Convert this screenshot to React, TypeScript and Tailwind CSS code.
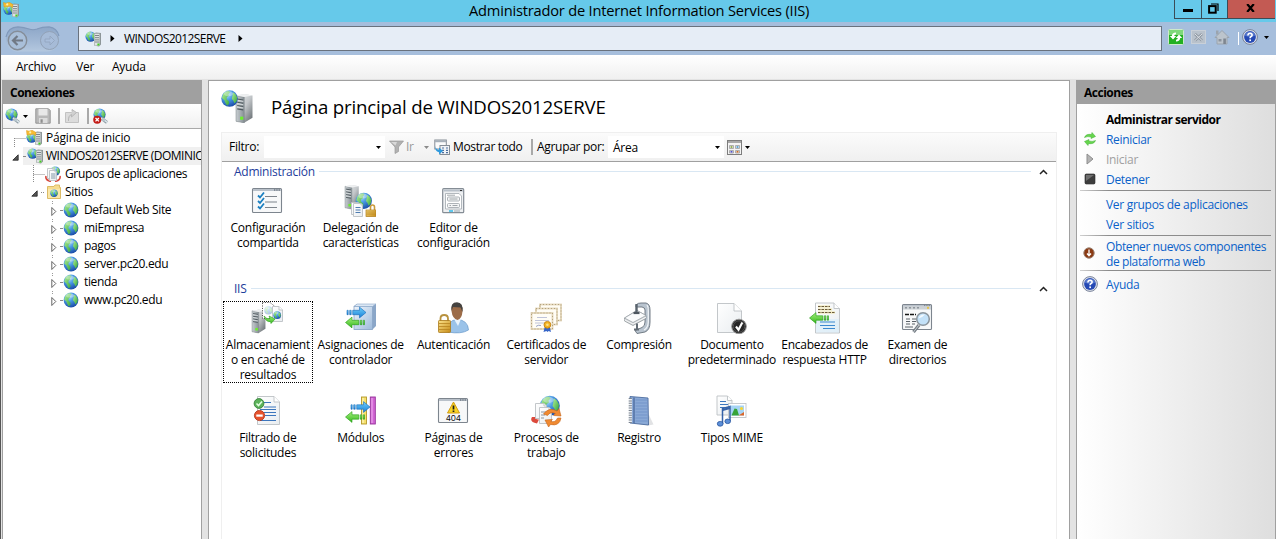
import type { ReactNode } from "react";

const Defs = () => (
  <svg width="0" height="0" className="absolute">
    <defs>
      <radialGradient id="sea" cx="0.35" cy="0.25" r="0.85">
        <stop offset="0" stopColor="#b5e2fa" />
        <stop offset="0.4" stopColor="#4a9ae4" />
        <stop offset="1" stopColor="#123f9e" />
      </radialGradient>
      <linearGradient id="land" x1="0" y1="0" x2="1" y2="1">
        <stop offset="0" stopColor="#b4f09a" />
        <stop offset="1" stopColor="#2fa438" />
      </linearGradient>
      <linearGradient id="metal" x1="0" y1="0" x2="1" y2="0">
        <stop offset="0" stopColor="#c9cfd2" />
        <stop offset="1" stopColor="#868f94" />
      </linearGradient>
      <linearGradient id="metalDark" x1="0" y1="0" x2="1" y2="1">
        <stop offset="0" stopColor="#eceeef" />
        <stop offset="0.5" stopColor="#c3c7ca" />
        <stop offset="1" stopColor="#5d6468" />
      </linearGradient>
      <linearGradient id="gold" x1="0" y1="0" x2="1" y2="1">
        <stop offset="0" stopColor="#fbe28a" />
        <stop offset="1" stopColor="#c58a16" />
      </linearGradient>
      <linearGradient id="greenArrow" x1="0" y1="0" x2="0" y2="1">
        <stop offset="0" stopColor="#a4f07c" />
        <stop offset="1" stopColor="#35b81c" />
      </linearGradient>
      <linearGradient id="blueArrow" x1="0" y1="0" x2="0" y2="1">
        <stop offset="0" stopColor="#6fd0fa" />
        <stop offset="1" stopColor="#1a80d8" />
      </linearGradient>
      <linearGradient id="cube" x1="0" y1="0" x2="1" y2="1">
        <stop offset="0" stopColor="#eef4fb" />
        <stop offset="1" stopColor="#9dbadb" />
      </linearGradient>
      <linearGradient id="page" x1="0" y1="0" x2="1" y2="1">
        <stop offset="0" stopColor="#ffffff" />
        <stop offset="1" stopColor="#e9edf0" />
      </linearGradient>
      <linearGradient id="pill" x1="0" y1="0" x2="0" y2="1">
        <stop offset="0" stopColor="#8ea7c8" />
        <stop offset="0.5" stopColor="#9fb6d3" />
        <stop offset="1" stopColor="#b4c8df" />
      </linearGradient>
    </defs>
  </svg>
);

type Pos = { x?: number; y?: number; s?: number };

const Globe = ({ x = 0, y = 0, s = 1 }: Pos) => (
  <g transform={`translate(${x} ${y}) scale(${s})`}>
    <circle cx="8" cy="8" r="7.4" fill="url(#sea)" />
    <path d="M2.4 3.8 L5 1.6 L7.4 1.2 L8.6 2.6 L7 4 L7.4 5.6 L5.6 6.6 L5.4 8.6 L7.4 10.4 L7.6 12.4 L5.8 14.4 L4.4 12 L3.4 9.4 L1.2 7.6Z" fill="url(#land)" />
    <path d="M11 2.4 L13.2 4 L14.8 7 L14.4 10.2 L12.4 12.4 L11.4 10 L10 8.2 L10.6 5.6Z" fill="url(#land)" />
    <ellipse cx="7" cy="3.6" rx="4" ry="2.2" fill="#fff" opacity="0.35" />
  </g>
);

const Server = ({ x = 0, y = 0, s = 1 }: Pos) => (
  <g transform={`translate(${x} ${y}) scale(${s})`}>
    <path d="M0 1.5 L8 0 L16 1.5 L16 23 L8 28 L0 26.5Z" fill="url(#metalDark)" />
    <path d="M0 1.5 L8 3 L8 28 L0 26.5Z" fill="url(#metal)" stroke="#7a8287" strokeWidth="0.5" />
    <path d="M0 1.5 L8 0 L16 1.5 L8 3Z" fill="#eef0f1" />
    <path d="M1.2 4.8 L7 5.8 M1.2 8 L7 9 M1.2 11.2 L7 12.2 M1.2 14.4 L7 15.4" stroke="#4f595e" strokeWidth="1.1" />
    <path d="M1.2 6.2 L7 7.2 M1.2 9.4 L7 10.4 M1.2 12.6 L7 13.6" stroke="#e2e6e8" strokeWidth="0.8" />
    <rect x="4" y="22" width="3" height="3" fill="#6cf02c" />
  </g>
);

const MiniServer = ({ x = 0, y = 0 }: Pos) => (
  <g transform={`translate(${x} ${y})`}>
    <path d="M0 1 L2 0 L7 0.5 L7 12 L5 14 L0 13Z" fill="#8d9698" />
    <path d="M0.5 1.2 H5.5 V13 H0.5Z" fill="#dfe3e3" />
    <path d="M1 3 H5 M1 5.2 H5 M1 7.4 H5 M1 9.5 H5" stroke="#727b80" strokeWidth="0.9" />
    <rect x="3.4" y="11" width="2" height="2" fill="#43cf20" />
  </g>
);

const Page = ({ x = 0, y = 0, w = 24, h = 30, f = 6 }: { x?: number; y?: number; w?: number; h?: number; f?: number }) => (
  <g transform={`translate(${x} ${y})`}>
    <path d={`M0.5 0.5 H${w - f} L${w - 0.5} ${f} V${h - 0.5} H0.5Z`} fill="url(#page)" stroke="#bcc1c4" strokeWidth="0.9" />
    <path d={`M${w - f} 0.5 V${f} H${w - 0.5}`} fill="#fff" stroke="#bcc1c4" strokeWidth="0.9" />
  </g>
);

const Lock = ({ x = 0, y = 0, open = false }: Pos & { open?: boolean }) => (
  <g transform={`translate(${x} ${y})`}>
    <path d={open ? "M5 6 V3 Q5 1 7 1 Q9 1 9 3 V6" : "M3 7 V4 Q3 1 6 1 Q9 1 9 4 V7"} fill="none" stroke="#c89a3c" strokeWidth="1.6" />
    <rect x="0.5" y="6" width="10" height="6.5" fill="url(#gold)" stroke="#b07c18" strokeWidth="0.7" />
    <path d="M1 8 H10.5 M1 10 H10.5" stroke="#b47f18" strokeWidth="0.7" />
  </g>
);

const ArrowR = ({ x = 0, y = 0 }: Pos) => (
  <g transform={`translate(${x} ${y})`} fill="url(#blueArrow)" stroke="#1769b8" strokeWidth="0.6">
    <path d="M0.5 3.8 h1.2 v4.4 h-1.2Z M3.2 3.8 h1.5 v4.4 h-1.5Z" />
    <path d="M6.2 3.8 H13 V0.6 L19.5 6 L13 11.4 V8.2 H6.2Z" />
  </g>
);

const ArrowL = ({ x = 0, y = 0 }: Pos) => (
  <g transform={`translate(${x} ${y})`} fill="url(#greenArrow)" stroke="#249a16" strokeWidth="0.6">
    <path d="M19.5 3.8 h-1.2 v4.4 h1.2Z M16.8 3.8 h-1.5 v4.4 h1.5Z" />
    <path d="M13.8 3.8 H7 V0.6 L0.5 6 L7 11.4 V8.2 H13.8Z" />
  </g>
);

const Window = ({ x, y, w, h }: { x: number; y: number; w: number; h: number }) => (
  <g>
    <rect x={x + 0.5} y={y + 0.5} width={w - 1} height={h - 1} rx="1" fill="#f7f8f9" stroke="#7d858e" strokeWidth="1.1" />
    <rect x={x + 1} y={y + 1} width={w - 2} height="2" fill="#b9c1ca" />
    <path d={`M${x + w - 8} ${y + 2} h1.3 m1 0 h1.3 m1 0 h1.3`} stroke="#4c5560" strokeWidth="1.2" />
  </g>
);

const Icon = ({ size = 32, vb, children }: { size?: number; vb?: number; children: ReactNode }) => (
  <svg width={size} height={size} viewBox={`0 0 ${vb ?? size} ${vb ?? size}`} className="block shrink-0">
    {children}
  </svg>
);

const GlobeServer = ({ star = false }: { star?: boolean }) => (
  <Icon size={16}>
    <Globe x={0} y={star ? 2 : 0} s={0.7} />
    <MiniServer x={9} y={1.5} />
    {star && (
      <>
        <path d="M0.5 0.5 L3 1.2 L6 0.2 L10 2.5 L9.5 5.5 L7.5 4.2 L3.8 4.6 L1 5 Z" fill="#f7bd33" stroke="#dd9512" strokeWidth="0.5" />
        <circle cx="4.2" cy="2.4" r="1.1" fill="#fff1b0" />
      </>
    )}
  </Icon>
);

const HelpIcon = () => (
  <Icon size={16}>
    <circle cx="8" cy="8" r="7.4" fill="#dfe3ec" stroke="#6d7891" strokeWidth="0.9" />
    <circle cx="8" cy="8" r="5.9" fill="#2549b4" />
    <path d="M2.8 6.5 A5.5 5.5 0 0 1 13.2 6.5 Q8 9 2.8 6.5Z" fill="#7d9be0" opacity="0.6" />
    <path d="M5.9 6.5 Q6 4.3 8.1 4.3 Q10.2 4.4 10.1 6.2 Q10 7.2 8.8 7.8 Q8.1 8.2 8.1 9.3" fill="none" stroke="#fff" strokeWidth="1.6" />
    <rect x="7.3" y="10.4" width="1.7" height="1.7" fill="#fff" />
  </Icon>
);

const Caret = ({ color = "#000" }: { color?: string }) => (
  <svg width="5" height="3" viewBox="0 0 5 3" className="block shrink-0">
    <path d="M0 0 H5 L2.5 3Z" fill={color} />
  </svg>
);

const Sep = () => <span className="block h-4 w-[2px] shrink-0 bg-[#a9a9a9]" />;

const icons: Record<string, ReactNode> = {
  shared: (
    <>
      <Window x={1} y={3} w={30} h={25} />
      <path d="M14 11.5 H26 M14 17 H26 M14 22.5 H26" stroke="#7d848c" strokeWidth="1" />
      <path d="M7 10.5 L9 12.5 L13 7.5 M7 16 L9 18 L13 13 M7 21.5 L9 23.5 L13 18.5" stroke="#1a7fc0" strokeWidth="1.8" fill="none" />
    </>
  ),
  delegation: (
    <>
      <Server x={1} y={0} s={0.86} />
      <Globe x={11} y={7} s={1.1} />
      <Page x={7} y={17} w={9} h={13} f={2} />
      <Page x={9} y={18} w={10} h={14} f={2} />
      <path d="M11.5 22.5 H16.5 M11.5 25 H16.5 M11.5 27.5 H16.5" stroke="#4e7cb0" />
      <Lock x={21.5} y={19} open />
    </>
  ),
  editor: (
    <>
      <rect x="5.7" y="3.7" width="21" height="24" rx="1" fill="#eef0f2" stroke="#858d95" strokeWidth="1.2" />
      <rect x="6.5" y="4.5" width="19.5" height="2" fill="#b9c1ca" />
      <path d="M23 5.5 h2" stroke="#333" />
      <path d="M8.5 8.5 H22 L24.5 11 V24 H8.5Z" fill="#fff" stroke="#aab1b7" strokeWidth="0.9" />
      <rect x="10.5" y="12" width="12" height="4" rx="1" fill="#f4f5f6" stroke="#9aa1a7" strokeWidth="0.8" />
      <rect x="10.5" y="18.5" width="12" height="4" rx="1" fill="#f4f5f6" stroke="#9aa1a7" strokeWidth="0.8" />
      <path d="M12.5 14 h8 M12.5 20.5 h1.5 M15.5 20.5 h5 M10 10.2 h8" stroke="#8b9298" strokeWidth="0.8" />
      <path d="M12 26 h4" stroke="#22b5e8" strokeWidth="1.4" />
      <path d="M17 26 h6" stroke="#b4bbc1" strokeWidth="1.4" />
    </>
  ),
  cache: (
    <>
      <Server x={1} y={7.5} s={0.84} />
      <path d="M11.5 0.5 H19 L24 4.5 V16.5 H11.5Z" fill="#fff" stroke="#333" strokeWidth="0.9" strokeDasharray="1 1.4" />
      <g opacity="0.35"><Globe x={13} y={4} s={0.55} /></g>
      <Page x={21} y={4} w={11} h={16} f={4} />
      <Globe x={22} y={9} s={0.52} />
      <path d="M13 14 Q16 18 19 16.5 L18 14 L24 17 L20 21.5 L19.6 19.5 Q15 20.5 13 14Z" fill="url(#greenArrow)" stroke="#249a16" strokeWidth="0.6" />
    </>
  ),
  handlers: (
    <>
      <path d="M10 4 L13 2 H32 V24 L28.5 27.5 H10Z" fill="#8aa6c8" />
      <rect x="10" y="4.5" width="18.5" height="23" fill="url(#cube)" stroke="#8aa6c8" strokeWidth="0.8" />
      <path d="M10 4.5 L13 2 H32 L28.5 4.5Z" fill="#dbe7f4" stroke="#8aa6c8" strokeWidth="0.6" />
      <ArrowR x={2.5} y={4.5} />
      <ArrowL x={1} y={14.5} />
    </>
  ),
  auth: (
    <>
      <path d="M11 30 Q10 18 20 17.5 Q31 18 31.5 28 Q24 32.5 11 30Z" fill="#9bc3e9" stroke="#6c9bca" strokeWidth="0.7" />
      <path d="M17 17 L21 24 L24 17Z" fill="#e9f3fc" />
      <path d="M14.5 9 Q14 1 20 1 Q26 1 25.5 9 Q25 17 20.5 18 Q15.5 17 14.5 9Z" fill="#9c6c48" />
      <path d="M14.5 9 Q13 0.5 20 0.3 Q26.5 0.5 25.5 10 L23.5 5.5 L16 5Z" fill="#454340" />
      <path d="M3.5 19 V16.5 Q3.5 13 7.2 13 Q11 13 11 16.5 V19" fill="none" stroke="#b8923f" strokeWidth="1.8" />
      <rect x="1.5" y="18.5" width="12" height="12" rx="0.8" fill="url(#gold)" stroke="#a97818" strokeWidth="0.8" />
      <path d="M2 21.5 H13 M2 24.5 H13 M2 27.5 H13" stroke="#b88420" strokeWidth="0.8" />
    </>
  ),
  certs: (
    <>
      {[[10, 2.5], [6, 6.5], [1.5, 11]].map(([x, y]) => (
        <g key={x}>
          <rect x={x} y={y} width="21" height="16" fill="#fffdf6" stroke="#e3d5b8" strokeWidth="1.8" />
          <rect x={x} y={y} width="21" height="16" fill="none" stroke="#b3a37f" strokeWidth="1" strokeDasharray="1 2" />
        </g>
      ))}
      <path d="M7 15.5 H17 M5 18.5 H19 M5 21 H14" stroke="#b9bdd6" strokeWidth="0.9" />
      <path d="M6 24.5 q2 -2 5 -1" stroke="#98a2c8" fill="none" />
      <path d="M15 24 L13.5 30 L16.5 29 L17.5 30 L18.5 29 L21 30 L19.5 24Z" fill="#3565c8" />
      <circle cx="17.4" cy="22.8" r="3.4" fill="#f3b323" stroke="#c4810f" strokeWidth="0.9" />
      <circle cx="17.4" cy="22.8" r="1.3" fill="#fbe28a" />
    </>
  ),
  compress: (
    <>
      <path d="M13 3 Q15 0.8 18 1 H23 Q27 2 27 8 V20 Q27 28 22 30 L14 31.5 L12 28.5 L19 25.5 Q22 24 22 20 V8 Q22 5.5 19 5 H13Z" fill="#b9c4cf" stroke="#66717b" strokeWidth="0.9" />
      <path d="M24 3 Q25.5 5 25.3 9 V20 Q25 26 21 28" fill="none" stroke="#f2f6f9" strokeWidth="1.2" />
      <path d="M1.5 16 L14 8.5 L23 13.5 L23 16.5 L10 23.5 L1.5 19Z" fill="#cfd3d6" stroke="#858c91" strokeWidth="0.7" />
      <path d="M1.5 16 L14 8.5 L23 13.5 L10 20.5Z" fill="#fafbfc" stroke="#979ea3" strokeWidth="0.7" />
      <path d="M1.5 17.8 L10 22 L23 15.2" fill="none" stroke="#fff" strokeWidth="0.8" />
      <path d="M13.5 2 V10" stroke="#5a646d" strokeWidth="2.4" />
      <path d="M10.5 11 H16.5" stroke="#4c555e" strokeWidth="2.2" />
      <path d="M14 21.5 V28 M11 27.5 H16" stroke="#626b74" strokeWidth="2" fill="none" />
    </>
  ),
  defdoc: (
    <>
      <Page x={2} y={1} w={25} h={30} f={8} />
      <circle cx="24" cy="24.5" r="7.3" fill="#262626" stroke="#9a9a9a" />
      <circle cx="24" cy="24.5" r="5.7" fill="none" stroke="#616161" strokeWidth="0.7" />
      <path d="M21 24.5 L23.5 27.8 L27.3 20.5" fill="none" stroke="#fff" strokeWidth="2.1" />
    </>
  ),
  headers: (
    <>
      <Page x={7} y={0.5} w={25} h={31} f={6} />
      <path d="M8 17 H31 V30.5 H8Z" fill="#dbeefa" opacity="0.7" />
      <path d="M10 4.5 H22 M10 7.5 H24 M10 10.5 H27" stroke="#f0e6ac" strokeWidth="2" />
      <path d="M10 4.5 H22 M10 7.5 H24 M10 10.5 H27" stroke="#6a5a3e" strokeWidth="1.1" strokeDasharray="2.5 1" />
      <path d="M12 20 H27 M12 23.5 H27 M15 26.5 H27" stroke="#3d8ad0" strokeWidth="1.1" />
      <ArrowL x={1} y={10} />
    </>
  ),
  browse: (
    <>
      <Window x={1} y={2} w={30} h={26} />
      <path d="M2 5.8 H30" stroke="#ccd1d5" strokeWidth="3.5" />
      <path d="M4 5.8 H20" stroke="#8e969d" strokeWidth="1.5" strokeDasharray="2 2" />
      <rect x="26" y="4.8" width="2" height="2" fill="#e4c34d" />
      <path d="M4 12.5 H15" stroke="#151515" strokeWidth="1.5" strokeDasharray="4 1" />
      <path d="M5 17 H9 M11 17 H15 M5 19.5 H9 M11 19.5 H15 M5 22 H9 M11 22 H14 M4 25 H12" stroke="#5b6268" />
      <path d="M18 23 L12.5 30" stroke="#757d84" strokeWidth="3.2" />
      <path d="M18 23 L12.5 30" stroke="#c6ccd1" strokeWidth="1" />
      <circle cx="22" cy="17" r="6.3" fill="#c3e1f8" stroke="#8a949c" strokeWidth="1.5" />
      <path d="M17.5 16.5 Q19 12 24 12.5 Q21 16 17.5 16.5Z" fill="#fff" opacity="0.8" />
    </>
  ),
  filtering: (
    <>
      <Page x={6} y={1} w={23} h={29} f={6} />
      <path d="M13 7.5 H20 M13 12 H25 M9 14.5 H25 M13 17.5 H25 M14 20.5 H25 M9 25.5 H25" stroke="#3c76bd" />
      <circle cx="8" cy="8.5" r="4.9" fill="#5cb25a" stroke="#2b7a30" strokeWidth="0.8" />
      <path d="M5.5 8.5 L7.5 10.5 L11 6.5" fill="none" stroke="#e3ffe0" strokeWidth="1.6" />
      <circle cx="8.5" cy="20.5" r="5.1" fill="#e6522c" stroke="#ad2c12" strokeWidth="0.8" />
      <rect x="5.3" y="19.5" width="6.4" height="2.2" fill="#fff" />
    </>
  ),
  modules: (
    <>
      <rect x="17.5" y="2" width="5" height="27" fill="#f5e06c" stroke="#b3982a" strokeWidth="0.9" />
      <path d="M19 3 V28" stroke="#fff9cc" />
      <rect x="26.3" y="2" width="5" height="27" fill="#d264d4" stroke="#943099" strokeWidth="0.9" />
      <path d="M28 3 V28" stroke="#f0b2f1" />
      <ArrowR x={6.5} y={6} />
      <ArrowL x={1} y={16} />
    </>
  ),
  errors: (
    <>
      <Window x={1} y={3} w={30} h={25} />
      <path d="M16.5 7 L22.5 18 H10.5Z" fill="#f9d423" stroke="#d39c12" strokeWidth="1" strokeLinejoin="round" />
      <path d="M16.5 10.5 V14.5 M16.5 15.6 V17" stroke="#1a1a1a" strokeWidth="1.7" />
      <text x="16.3" y="26" textAnchor="middle" fontSize="8" textLength="15" lengthAdjust="spacingAndGlyphs" fill="#111" fontFamily="Inter, sans-serif">404</text>
    </>
  ),
  workers: (
    <>
      <Globe x={9} y={0} s={1.35} />
      <path d="M2 22 Q-1 27 7 28.5 L9 24.5 Q5 25 5.5 22Z" fill="#dc4a3c" />
      <Page x={5} y={8} w={12} h={16} f={3} />
      <Page x={9} y={12} w={13} h={17} f={3} />
      <path d="M11 17 H16 M11 20 H15 M11 23 H14" stroke="#8a97a4" />
      <path d="M13.5 19 Q19 11.5 27 16 L29 13.5 L31 21 L23.5 20.5 L25.4 18.6 Q20.5 16 17.5 20.5Z" fill="#f08a31" stroke="#c4631a" strokeWidth="0.6" />
      <path d="M31 23 Q29.5 31.5 20.5 29.5 L18.6 32 L15 25 L22.4 24.4 L20.9 26.4 Q25.4 27.8 27.6 23Z" fill="#f08a31" stroke="#c4631a" strokeWidth="0.6" />
    </>
  ),
  logging: (
    <>
      <path d="M12 28.5 L25 30.5 L30.5 29.5 L26 20Z" fill="#9aa0a5" opacity="0.3" />
      <path d="M7 1.5 L25 3 L25.5 30 L7 28Z" fill="#8aa9d6" stroke="#4d6d9f" strokeWidth="0.9" />
      <path d="M11 2.4 V28" stroke="#436398" strokeWidth="1.2" />
      <path d="M12.5 5 H24.5 M12.5 8 H24.5 M12.5 11 H24.5 M12.5 14 H24.5 M12.5 17 H24.5 M12.5 20 H24.5 M12.5 23 H24.5 M12.5 26 H24.5" stroke="#6f92c8" strokeWidth="0.9" />
      <path d="M7.3 3 V28" stroke="#eef1f5" strokeWidth="3.2" />
      <path d="M7.3 3 V28" stroke="#7a838e" strokeWidth="3.2" strokeDasharray="1 1.4" />
    </>
  ),
  mime: (
    <>
      <Page x={1.5} y={0.5} w={16} h={20} f={5} />
      <path d="M5 6.5 H11 M5 9.5 H14 M5 12.5 H14" stroke="#3c76bd" />
      <rect x="13.5" y="8.5" width="17.5" height="14" fill="#fff" stroke="#c0c5c9" strokeWidth="0.9" />
      <rect x="15.5" y="10.5" width="13.5" height="10" fill="#a5d4f5" />
      <path d="M16.5 20.5 L19.5 13.5 L22 14 L24 20.5Z" fill="#37a338" />
      <path d="M23.5 20.5 L29 17 V20.5Z" fill="#d9662b" />
      <circle cx="26.5" cy="13.5" r="1.6" fill="#f5d536" />
      <path d="M7.5 29 V13.5 L15 11.5 V26" fill="none" stroke="#3562a8" strokeWidth="1.5" />
      <path d="M7.5 15 L15 13" stroke="#3562a8" strokeWidth="2.2" />
      <ellipse cx="5.2" cy="28.8" rx="2.9" ry="2.4" fill="#5c8fd8" stroke="#27549d" strokeWidth="0.8" />
      <ellipse cx="12.7" cy="26.3" rx="2.8" ry="2.3" fill="#5c8fd8" stroke="#27549d" strokeWidth="0.8" />
    </>
  ),
};

type ItemData = { icon: string; lines: string[]; focus?: boolean };

const Item = ({ icon, lines, focus }: ItemData) => (
  <div className="flex h-[93px] w-[92.8px] justify-center">
    <div
      className={
        focus
          ? "flex h-[82px] w-[90px] flex-col items-center border border-dotted border-black"
          : "flex h-[82px] w-[90px] flex-col items-center border border-transparent"
      }
    >
      <span className="-ml-px block"><Icon>{icons[icon]}</Icon></span>
      <div className="mt-[3px] text-center leading-[15px]">
        {lines.map((l) => (
          <div key={l} className="whitespace-nowrap">{l}</div>
        ))}
      </div>
    </div>
  </div>
);

const Group = ({ title, items, className }: { title: string; items: ItemData[]; className: string }) => (
  <section className={className}>
    <div className="flex h-4 items-center pr-[8px] pl-3">
      <span className="pt-[2px] text-[#1e3c9b]">{title}</span>
      <span className="ml-1 h-px flex-1 bg-[#d9e7f3]" />
      <svg width="9" height="6" viewBox="0 0 9 6" className="mt-px ml-2">
        <path d="M1 5 L4.5 1.5 L8 5" fill="none" stroke="#222" strokeWidth="1.5" />
      </svg>
    </div>
    <div className="mt-[5px] -ml-[0.5px] flex flex-wrap">
      {items.map((i) => (
        <Item key={i.icon} {...i} />
      ))}
    </div>
  </section>
);

const admin: ItemData[] = [
  { icon: "shared", lines: ["Configuración", "compartida"] },
  { icon: "delegation", lines: ["Delegación de", "características"] },
  { icon: "editor", lines: ["Editor de", "configuración"] },
];

const iis: ItemData[] = [
  { icon: "cache", lines: ["Almacenamient", "o en caché de", "resultados"], focus: true },
  { icon: "handlers", lines: ["Asignaciones de", "controlador"] },
  { icon: "auth", lines: ["Autenticación"] },
  { icon: "certs", lines: ["Certificados de", "servidor"] },
  { icon: "compress", lines: ["Compresión"] },
  { icon: "defdoc", lines: ["Documento", "predeterminado"] },
  { icon: "headers", lines: ["Encabezados de", "respuesta HTTP"] },
  { icon: "browse", lines: ["Examen de", "directorios"] },
  { icon: "filtering", lines: ["Filtrado de", "solicitudes"] },
  { icon: "modules", lines: ["Módulos"] },
  { icon: "errors", lines: ["Páginas de", "errores"] },
  { icon: "workers", lines: ["Procesos de", "trabajo"] },
  { icon: "logging", lines: ["Registro"] },
  { icon: "mime", lines: ["Tipos MIME"] },
];

const sites = ["Default Web Site", "miEmpresa", "pagos", "server.pc20.edu", "tienda", "www.pc20.edu"];

const OpenTri = () => (
  <svg width="7" height="7" viewBox="0 0 7 7" className="mt-[2px] block shrink-0">
    <path d="M6.2 0.8 V6.2 H0.8Z" fill="#555" stroke="#222" strokeWidth="0.8" />
  </svg>
);

const SiteTri = () => (
  <svg width="6" height="18" viewBox="0 0 6 18" className="block shrink-0">
    <path d="M1.5 0 V4" stroke="#999" strokeDasharray="1 1" />
    <path d="M0.8 6.5 L4.8 10.5 L0.8 14.5Z" fill="#fff" stroke="#555" strokeWidth="0.9" />
  </svg>
);

const Branch = ({ top }: { top: number }) => (
  <svg width="12" height="18" viewBox="0 0 12 18" className="block shrink-0">
    <path d={`M0.5 ${top} V18 M0.5 9.5 H12`} fill="none" stroke="#8a8a8a" strokeDasharray="1 1" />
  </svg>
);

const Dots = ({ className }: { className: string }) => (
  <span className={"block shrink-0 border-t border-dotted border-[#888] " + className} />
);

const Magnet = ({ stop = false }: { stop?: boolean }) => (
  <Icon size={16}>
    <Globe x={0} y={0} s={0.82} />
    <path d="M8 10 L14 14.5" stroke="#8b99a2" strokeWidth="3.4" />
    <path d="M8 10 L14.4 14.4" stroke="#dbe5ea" strokeWidth="1.6" />
    <circle cx="10.5" cy="11.6" r="1.8" fill="#b5c5cc" />
    {stop && (
      <>
        <circle cx="4.2" cy="11.7" r="4" fill="#c31b16" />
        <path d="M2.5 10 L5.9 13.4 M5.9 10 L2.5 13.4" stroke="#fff" strokeWidth="1.3" />
      </>
    )}
  </Icon>
);

const Tree = () => (
  <aside className="flex w-[200px] shrink-0 flex-col overflow-hidden border-r border-l border-[#a0a0a0] bg-white">
    <div className="flex h-6 shrink-0 items-center bg-[#a0a0a0] pt-[2px] pl-[7px] font-bold tracking-[-0.48px]">Conexiones</div>
    <div className="flex h-[25px] shrink-0 items-center border-b border-[#a9a9a9] bg-linear-to-b from-white to-[#f0f0f0] pl-[2px]">
      <Magnet />
      <span className="mr-[7px] ml-[2px]"><Caret /></span>
      <Icon size={16}>
        <path d="M0.8 0.8 H13.5 L15.2 2.5 V15.2 H0.8Z" fill="#b9b9b9" stroke="#969696" />
        <rect x="3.5" y="1" width="9" height="6.5" fill="#e8e8e8" />
        <rect x="4" y="10" width="8.5" height="5" fill="#dcdcdc" />
        <rect x="5.5" y="11.3" width="2.2" height="3.5" fill="#8f8f8f" />
      </Icon>
      <span className="mr-[4px] ml-[7px]"><Sep /></span>
      <Icon size={16}>
        <path d="M1.5 4.5 H14.5 V14.5 H1.5Z" fill="#dcdcdc" stroke="#c2c2c2" />
        <path d="M4.5 13 Q4 7.5 7.5 6.5 V9 L12.5 4.5 L8 1.5 V3.5" fill="#d0d0d0" stroke="#b0b0b0" strokeWidth="0.8" />
      </Icon>
      <span className="mr-[4px] ml-[7px]"><Sep /></span>
      <Magnet stop />
    </div>
    <div className="flex flex-col tracking-[-0.35px] whitespace-nowrap">
      <div className="flex h-[18px] items-center pl-[11px]">
        <Branch top={9} />
        <GlobeServer star />
        <span className="ml-[4px] tracking-[-0.18px]">Página de inicio</span>
      </div>
      <div className="flex h-[18px] items-center pl-[9px]">
        <OpenTri />
        <span className="ml-[4px] flex h-[18px] flex-1 items-center bg-[#f0f0f0]">
          <Dots className="mr-[2px] w-[2px]" />
          <GlobeServer />
          <span className="ml-[3px] tracking-[-0.52px]">WINDOS2012SERVE (DOMINIO</span>
        </span>
      </div>
      <div className="flex h-[18px] items-center pl-[30px]">
        <Branch top={0} />
        <Icon size={16}>
          <Globe x={5} y={0} s={0.65} />
          <path d="M1 10 Q0 14 6 15.5 M15 10 Q16 14 10 15.5" stroke="#d8493e" strokeWidth="1.6" fill="none" />
          <Page x={2} y={2} w={8} h={11} f={2} />
          <Page x={4} y={4} w={8} h={11} f={2} />
          <path d="M6 8 H10.5 M6 10 H10.5 M6 12 H10.5" stroke="#78909f" strokeWidth="0.9" />
        </Icon>
        <span className="ml-[4px]">Grupos de aplicaciones</span>
      </div>
      <div className="flex h-[18px] items-center pl-[28px]">
        <OpenTri />
        <Dots className="mr-[2px] ml-[3px] w-[3px]" />
        <Icon size={16}>
          <path d="M1.5 2.5 L8 2.5 L9 1 H13.5 V3.5 H14.5 V14.5 H1.5Z" fill="#f6dc8e" stroke="#dcbb66" />
          <path d="M2 5 H14 V14 H2Z" fill="#f9e7a9" />
          <Globe x={4} y={5.3} s={0.5} />
        </Icon>
        <span className="ml-[3px]">Sitios</span>
      </div>
      {sites.map((s) => (
        <div key={s} className="flex h-[18px] items-center pl-[48px]">
          <SiteTri />
          <Dots className="mr-px ml-[3px] w-[2px]" />
          <Icon size={16}><Globe /></Icon>
          <span className="ml-[5px]">{s}</span>
        </div>
      ))}
    </div>
  </aside>
);

const Action = ({ icon, children, className = "" }: { icon?: ReactNode; children: ReactNode; className?: string }) => (
  <div className={"flex h-5 items-center " + className}>
    <span className="flex w-[29px] shrink-0 items-center justify-center pr-[3px]">{icon}</span>
    <span className="pt-px whitespace-nowrap">{children}</span>
  </div>
);

const Rule = ({ className = "" }: { className?: string }) => (
  <div className={"mr-[4px] ml-[3px] h-px shrink-0 bg-linear-to-r from-[#d0d0d0] via-[#8c8c8c] via-15% to-[#8c8c8c] " + className} />
);

const Actions = () => (
  <aside className="flex w-[200px] shrink-0 flex-col border-r border-l border-[#a0a0a0] bg-linear-to-r from-white to-[#dedede] tracking-[-0.3px] text-[#0a62c9]">
    <div className="mr-[-1px] flex h-6 shrink-0 items-center bg-[#a0a0a0] pt-[2px] pl-[7px] font-bold tracking-[-0.48px] text-black">Acciones</div>
    <Action className="mt-[5px] font-bold tracking-[-0.52px] text-black">Administrar servidor</Action>
    <Action
      icon={
        <Icon size={14}>
          <path d="M1.5 5.5 Q3 1.5 8.5 2.5 L9 0.5 L12.5 4.5 L8 6.5 L8.3 5 Q4.5 4 1.5 5.5Z" fill="#66d64c" stroke="#3cac30" strokeWidth="0.5" />
          <path d="M12.5 8.5 Q11 12.5 5.5 11.5 L5 13.5 L1.5 9.5 L6 7.5 L5.7 9 Q9.5 10 12.5 8.5Z" fill="#66d64c" stroke="#3cac30" strokeWidth="0.5" />
        </Icon>
      }
    >
      Reiniciar
    </Action>
    <Action
      className="text-[#a0a0a0]"
      icon={<Icon size={12}><path d="M3 1 L9 6 L3 11Z" fill="#b4b4b4" stroke="#8e8e8e" /></Icon>}
    >
      Iniciar
    </Action>
    <Action
      icon={
        <Icon size={12}>
          <rect x="1.2" y="1.2" width="9.6" height="9.6" rx="0.8" fill="#3c3c3c" stroke="#262626" />
          <path d="M2 2 H10 L2 8Z" fill="#6e6e6e" />
        </Icon>
      }
    >
      Detener
    </Action>
    <Rule className="mt-[1px]" />
    <Action className="mt-[3px]">Ver grupos de aplicaciones</Action>
    <Action>Ver sitios</Action>
    <Rule className="mt-[1px]" />
    <div className="flex h-[34px] items-center leading-[15px] tracking-[-0.39px]">
      <span className="flex w-[29px] shrink-0 justify-center pr-[6px]">
        <Icon size={12}>
          <circle cx="6" cy="6" r="5.2" fill="#8a3a13" stroke="#9c8577" />
          <path d="M6 2.5 V8 M4 6.5 L6 8.8 L8 6.5" stroke="#fff" strokeWidth="1.3" fill="none" />
        </Icon>
      </span>
      <span className="pt-px whitespace-nowrap">Obtener nuevos componentes<br />de plataforma web</span>
    </div>
    <Rule />
    <Action className="mt-[3px]" icon={<HelpIcon />}>Ayuda</Action>
  </aside>
);

const Main = () => (
  <main className="flex w-[862px] shrink-0 flex-col border-t border-r border-l border-[#a0a0a0] bg-white pr-[12px] pl-[12px]">
    <div className="flex h-[51px] shrink-0 items-center">
      <Icon size={33} vb={33}>
        <Server x={15} y={4} s={1.03} />
        <Globe x={-0.4} y={-0.4} s={1.12} />
      </Icon>
      <h1 className="ml-[17px] text-[18.67px] tracking-[-0.18px] whitespace-nowrap">Página principal de WINDOS2012SERVE</h1>
    </div>
    <div className="flex flex-1 flex-col border-x border-[#efefef]">
      <div className="flex h-[30px] shrink-0 items-center border-t border-b border-t-[#efefef] border-b-[#a0a0a0] bg-linear-to-b from-[#fbfbfb] to-[#f0f0f0] whitespace-nowrap">
        <span className="w-[42px] pl-[7px]">Filtro:</span>
        <span className="flex h-[22px] w-[121px] items-center justify-end bg-white pr-1"><Caret /></span>
        <span className="ml-[4px]">
          <Icon size={16}>
            <path d="M0.5 2 H14.5 L9.5 8 V12.5 L6 14.5 V8Z" fill="#b2b2b2" stroke="#989898" strokeWidth="0.7" />
            <path d="M2 3 H8 L6.5 6.5Z" fill="#d9d9d9" />
          </Icon>
        </span>
        <span className="ml-[1px] w-[18px] text-[#9a9a9a]">Ir</span>
        <Caret color="#8a8a8a" />
        <span className="ml-[5px]">
          <Icon size={16}>
            <rect x="0.8" y="1" width="11.5" height="9" fill="#fbfbfb" stroke="#858d96" />
            <rect x="1" y="1.2" width="11" height="2" fill="#a7b0ba" />
            <rect x="6" y="6.5" width="9.5" height="9" fill="#f0f3f6" stroke="#858d96" />
            <path d="M8 9 h2 M12 9 h2 M8 11.3 h2 M12 11.3 h2 M8 13.6 h2 M12 13.6 h2" stroke="#4d6f9e" strokeWidth="1.2" />
            <path d="M1.5 7 Q1.5 10.5 5 10.8 V8.5 L9 12 L5 15.5 V13.2 Q0.5 12.5 1.5 7Z" fill="#2f9ade" />
          </Icon>
        </span>
        <span className="ml-[3px] w-[78px] tracking-[-0.36px]">Mostrar todo</span>
        <Sep />
        <span className="ml-[4px] w-[71px] tracking-[-0.3px]">Agrupar por:</span>
        <span className="flex h-[22px] w-[116px] items-center justify-between bg-white pt-px pr-1 pl-[5px]">Área<Caret /></span>
        <span className="mr-[3px] ml-[3px]">
          <Icon size={15}>
            <rect x="0.5" y="0.5" width="14" height="14" fill="#f4f4f4" stroke="#7d7d7d" />
            <rect x="1" y="1" width="13" height="2" fill="#a8a8a8" />
            <path d="M2.5 5.5 h4 v3 h-4Z M8.5 5.5 h4 v3 h-4Z M2.5 10.5 h4 v2.5 h-4Z M8.5 10.5 h4 v2.5 h-4Z" fill="#fff" stroke="#9b9b9b" strokeWidth="0.8" />
            <rect x="3.5" y="6.2" width="2" height="1.6" fill="#7a9b31" />
            <rect x="9.5" y="6.2" width="2" height="1.6" fill="#3b8fc8" />
            <rect x="3.5" y="11" width="2" height="1.6" fill="#5252c9" />
            <rect x="9.5" y="11" width="2" height="1.6" fill="#cc6b2a" />
          </Icon>
        </span>
        <Caret />
      </div>
      <Group title="Administración" items={admin} className="mt-[1px] h-[117px]" />
      <Group title="IIS" items={iis} className="h-[220px]" />
    </div>
  </main>
);

export default function App() {
  return (
    <div className="flex h-[539px] w-[1276px] flex-col overflow-hidden border-l border-[#555] bg-[#e3e3e3] font-['Open_Sans','Noto_Sans',sans-serif] text-[12px] leading-4 tracking-[-0.25px] text-black">
      <Defs />
      <header className="flex h-[22px] shrink-0 bg-[#66c9ea]">
        <span className="w-[468px] pt-[2px] pl-[2px]"><GlobeServer star /></span>
        <span className="w-[705px] text-[14.67px] leading-[21px] tracking-[-0.21px] whitespace-nowrap">
          Administrador de Internet Information Services (IIS)
        </span>
        <div className="flex h-[19px] border-b border-l border-[#3b4c57]">
          <span className="flex w-[27px] items-center justify-center border-r border-[#3b4c57]">
            <svg width="10" height="3" className="mt-[3px]"><rect width="10" height="3" /></svg>
          </span>
          <span className="flex w-[26px] items-center justify-center border-r border-[#3b4c57]">
            <svg width="11" height="11" viewBox="0 0 11 11" className="mt-[-2px] ml-[-2px]">
              <path d="M3 1 H10 V8" fill="none" stroke="#000" strokeWidth="1.2" />
              <rect x="1.1" y="3.1" width="6.6" height="6.6" fill="none" stroke="#000" strokeWidth="2" />
            </svg>
          </span>
          <span className="flex w-[47px] items-center justify-center bg-[#c35a53]">
            <svg width="9" height="8" viewBox="0 0 9 8" className="mt-[-2px] ml-[-2px]">
              <path d="M1.2 0 L7.8 8 M7.8 0 L1.2 8" stroke="#000" strokeWidth="2.2" />
            </svg>
          </span>
        </div>
      </header>
      <nav className="flex h-[33px] shrink-0 items-center bg-[#a6bedc]">
        <svg width="56" height="28" viewBox="0 0 56 28" className="ml-[3px] shrink-0">
          <path d="M2 13 Q3 2 14 2 Q20 2 25 4 Q29 5.5 33 4 Q38 2 45 2 Q54 4 55 14 Q54 26 43 26.5 H13 Q2 25 2 13Z" fill="url(#pill)" />
          <path d="M2 12 Q4 2 14 1.8 Q20 2 25 4 Q29 5.5 33 4 Q38 1.8 45 1.8 Q53 3 55 11" fill="none" stroke="#8099bb" strokeWidth="1.2" />
          <circle cx="13.5" cy="15.5" r="9.2" fill="#a9bfd9" stroke="#858d98" strokeWidth="1.4" />
          <path d="M19 15.5 H9.5 M13.5 11 L9 15.5 L13.5 20" fill="none" stroke="#717985" strokeWidth="2.2" />
          <circle cx="45.5" cy="15.5" r="9" fill="#a6bbd7" stroke="#92a2b7" strokeWidth="1" />
          <path d="M41 14 H46 V11 L50.5 15.5 L46 20 V17 H41Z" fill="#a9bedb" stroke="#93a6c0" strokeWidth="0.9" />
        </svg>
        <div className="ml-[18px] flex h-[25px] w-[1084px] shrink-0 items-center border border-[#69727e] bg-[#e6edf6] pl-[6px]">
          <GlobeServer />
          <svg width="5" height="7" viewBox="0 0 5 7" className="ml-[9px]"><path d="M0.5 0 L4.5 3.5 L0.5 7Z" /></svg>
          <span className="ml-[9px] w-[114px] tracking-[-0.57px]">WINDOS2012SERVE</span>
          <svg width="5" height="7" viewBox="0 0 5 7"><path d="M0.5 0 L4.5 3.5 L0.5 7Z" /></svg>
        </div>
        <div className="-mt-[3px] ml-[6px] flex items-center">
          <Icon size={16}>
            <rect x="0.5" y="0.5" width="15" height="15" rx="1" fill="#22b022" stroke="#cdeaca" />
            <rect x="1" y="1" width="14" height="5" fill="#7ed87a" />
            <path d="M5 10.5 L1.8 7 H3.8 Q4 3.6 8 3.4 V5.2 Q6.4 5.4 6.2 7 H8.2Z" fill="#fff" />
            <path d="M11 5.5 L14.2 9 H12.2 Q12 12.4 8 12.6 V10.8 Q9.6 10.6 9.8 9 H7.8Z" fill="#fff" />
          </Icon>
          <span className="ml-[7px]">
            <Icon size={16}>
              <rect x="0.5" y="1.5" width="14" height="13" fill="#b9c2cc" stroke="#c9d0d8" />
              <path d="M4 5 L11 11.5 M11 5 L4 11.5" stroke="#8f98a2" strokeWidth="2.6" />
              <path d="M4 5 L11 11.5 M11 5 L4 11.5" stroke="#dde2e8" strokeWidth="1" />
            </Icon>
          </span>
          <span className="ml-[7px]">
            <Icon size={16}>
              <path d="M1 8.5 L8 1.5 L15 8.5 H13 V15 H3 V8.5Z" fill="#bcc4cc" stroke="#9ba4ae" />
              <rect x="2" y="1.5" width="2.5" height="4" fill="#9ba4ae" />
              <rect x="4.5" y="10" width="3" height="2.5" fill="#8b939e" />
              <rect x="9.3" y="9.5" width="2.6" height="5.5" fill="#7e8690" />
            </Icon>
          </span>
          <span className="mt-[3px] mr-[3px] ml-[8px] block h-[13px] w-px bg-white" />
          <HelpIcon />
          <span className="ml-[6px]"><Caret /></span>
        </div>
      </nav>
      <div className="flex h-6 shrink-0 items-center bg-linear-to-b from-white to-[#f0f0f0]">
        <span className="w-[61px] pl-[15px]">Archivo</span>
        <span className="ml-[14px] w-[36px]">Ver</span>
        <span>Ayuda</span>
      </div>
      <div className="mt-px flex flex-1 pl-px">
        <Tree />
        <div className="w-[6px] shrink-0" />
        <Main />
        <div className="w-[6px] shrink-0" />
        <Actions />
      </div>
    </div>
  );
}
